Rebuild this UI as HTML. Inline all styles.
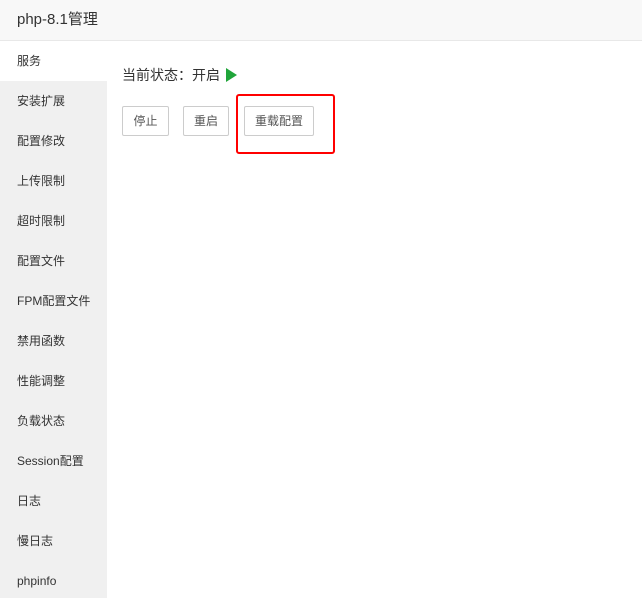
<!DOCTYPE html>
<html><head><meta charset="utf-8"><style>
body{margin:0;width:642px;height:598px;background:#fff;font-family:"Liberation Sans","Noto Sans CJK SC",sans-serif;position:relative;overflow:hidden;color:#333}
.hd{position:absolute;left:0;top:0;width:642px;height:40px;background:#f8f8f8;border-bottom:1px solid #e8e8e8;font-size:15px;line-height:40px;text-indent:17px;color:#333}
.sb{position:absolute;left:0;top:41px;width:107px;height:557px;background:#f0f0f0}
.sb div{height:40px;line-height:40px;font-size:12px;padding-left:17px;color:#333}
.sb div.on{background:#fff;color:#333}
.st{position:absolute;left:122px;top:66px;font-size:14px;line-height:18px}
.tri{display:inline-block;width:0;height:0;border-left:11px solid #20a53a;border-top:7px solid transparent;border-bottom:7px solid transparent;vertical-align:-2px;margin-left:6px}
.b{position:absolute;top:106px;height:28px;border:1px solid #ccc;border-radius:2px;font-size:12px;line-height:28px;text-align:center;color:#555;background:#fff}
.red{position:absolute;left:236px;top:94px;width:95px;height:56px;border:2px solid #f00;border-radius:3px}
</style></head><body>
<div class="hd">php-8.1管理</div>
<div class="sb">
<div class="on">服务</div><div>安装扩展</div><div>配置修改</div><div>上传限制</div><div>超时限制</div><div>配置文件</div><div>FPM配置文件</div><div>禁用函数</div><div>性能调整</div><div>负载状态</div><div>Session配置</div><div>日志</div><div>慢日志</div><div>phpinfo</div>
</div>
<div class="st">当前状态：开启<span class="tri"></span></div>
<div class="b" style="left:122px;width:45px">停止</div>
<div class="b" style="left:183px;width:44px">重启</div>
<div class="b" style="left:244px;width:68px">重载配置</div>
<div class="red"></div>
</body></html>
